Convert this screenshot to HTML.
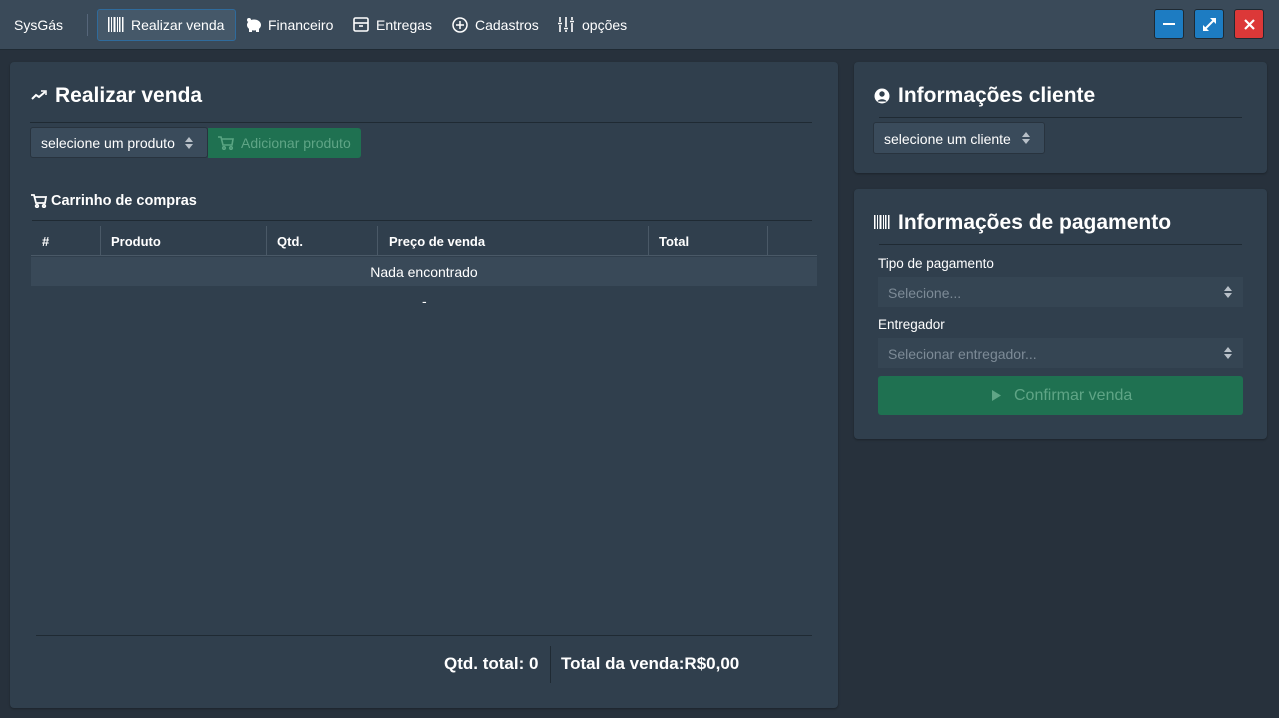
<!DOCTYPE html>
<html><head><meta charset="utf-8"><style>
*{box-sizing:border-box;margin:0;padding:0}
body{width:1279px;height:718px;background:#27313c;font-family:"Liberation Sans",sans-serif;color:#fff;position:relative;overflow:hidden;font-size:14px}
.a{position:absolute}
.top{left:0;top:0;width:1279px;height:50px;background:#3a4a59;border-bottom:1px solid #1f2a33}
.nav{top:16px;font-size:14px;color:#fff;white-space:nowrap}
.card{background:#303f4d;border-radius:4px;box-shadow:0 1px 2px rgba(0,0,0,.3)}
.h{font-size:21px;font-weight:bold;letter-spacing:0;white-space:nowrap}
.line{height:1px;background:#1f2a33}
.sel{background:#3a4b5b;border:1px solid #28333e;border-radius:3px;font-size:14px;color:#fff}
.btn{width:30px;height:30px;border-radius:3px;top:9px;border:1px solid #1f2a33}
.lab{font-size:13.5px}
.inp{background:#354553;color:#7d8b97;font-size:14px;height:30px;padding:8px 10px}
.tot{font-weight:bold;font-size:17px;white-space:nowrap;letter-spacing:0}
</style></head><body>
<div class="a top"></div>
<div class="a nav" style="left:14px;top:17px">SysGás</div>
<div class="a" style="left:87px;top:14px;width:1px;height:22px;background:#56667a"></div>
<div class="a" style="left:97px;top:9px;width:139px;height:32px;background:#455869;border:1px solid #2f6b9c;border-radius:3px"></div>
<svg class="a" style="left:108px;top:17px" width="16" height="15"><g fill="#fff"><rect x="0" width="1.5" height="15"/><rect x="3" width="1" height="15"/><rect x="5.5" width="2" height="15"/><rect x="9" width="1" height="15"/><rect x="11" width="1.5" height="15"/><rect x="14" width="1.5" height="15"/></g></svg>
<div class="a nav" style="left:131px;top:17px">Realizar venda</div>
<svg class="a" style="left:245px;top:17px" width="17" height="15"><ellipse cx="9" cy="8" rx="7" ry="5.5" fill="#fff"/><rect x="4" y="11" width="3" height="4" fill="#fff"/><rect x="11" y="11" width="3" height="4" fill="#fff"/><circle cx="4" cy="3" r="2" fill="#fff"/></svg>
<div class="a nav" style="left:268px;top:17px">Financeiro</div>
<svg class="a" style="left:353px;top:17px" width="16" height="15" fill="none" stroke="#fff" stroke-width="1.6"><rect x="1" y="1" width="14" height="13" rx="1.5"/><line x1="1" y1="6" x2="15" y2="6"/><line x1="6" y1="9" x2="10" y2="9"/></svg>
<div class="a nav" style="left:376px;top:17px">Entregas</div>
<svg class="a" style="left:452px;top:17px" width="16" height="16" fill="none" stroke="#fff" stroke-width="1.5"><circle cx="8" cy="8" r="7"/><path d="M8 4v8M4 8h8"/></svg>
<div class="a nav" style="left:475px;top:17px">Cadastros</div>
<svg class="a" style="left:558px;top:16px" width="17" height="17" stroke="#fff" stroke-width="1.6"><path d="M2 1v5M2 9v7M8 1v10M8 14v2M14 1v3M14 7v9M0 7.5h4M6 12.5h4M12 5.5h4"/></svg>
<div class="a nav" style="left:582px;top:17px">opções</div>
<div class="a btn" style="left:1154px;background:#1d7cc2"><div class="a" style="left:8px;top:13px;width:12px;height:2px;background:#fff"></div></div>
<div class="a btn" style="left:1194px;background:#1d7cc2"><svg class="a" style="left:6px;top:6px" width="17" height="17" stroke="#fff" stroke-width="2" fill="#fff"><path d="M3 14L14 3" fill="none"/><path d="M9 2h6v6z" stroke-width="0"/><path d="M2 9v6h6z" stroke-width="0"/></svg></div>
<div class="a btn" style="left:1234px;background:#dc3838"><svg class="a" style="left:9px;top:9px" width="11" height="11" stroke="#fff" stroke-width="2.2"><path d="M1 1l9 9M10 1l-9 9"/></svg></div>

<div class="a card" style="left:10px;top:62px;width:828px;height:646px"></div>
<svg class="a" style="left:31px;top:90px" width="16" height="10" fill="none" stroke="#fff" stroke-width="2"><path d="M1 9l4-4 3 2 6-5"/><path d="M10 1h5v4" stroke-width="1.5"/></svg>
<div class="a h" style="left:55px;top:84px">Realizar venda</div>
<div class="a line" style="left:30px;top:122px;width:782px"></div>
<div class="a sel" style="left:30px;top:127px;width:178px;height:31px;padding:7px 10px">selecione um produto</div>
<svg class="a" style="left:185px;top:137px" width="8" height="12" fill="#b8c0c8"><path d="M0 5l4-5 4 5zM0 7l4 5 4-5z"/></svg>
<div class="a" style="left:208px;top:128px;width:153px;height:30px;background:#1f7151;border-radius:0 3px 3px 0"></div>
<svg class="a" style="left:218px;top:136px" width="16" height="14" fill="none" stroke="#5aa583" stroke-width="1.6"><path d="M0 1h3l2 8h9l1-6H4"/><circle cx="6" cy="12" r="1.3"/><circle cx="13" cy="12" r="1.3"/></svg>
<div class="a" style="left:241px;top:135px;color:#5fa586">Adicionar produto</div>
<svg class="a" style="left:31px;top:194px" width="16" height="14" fill="none" stroke="#fff" stroke-width="1.8"><path d="M0 1h3l2 8h9l1-6H4"/><circle cx="6" cy="12" r="1.3"/><circle cx="13" cy="12" r="1.3"/></svg>
<div class="a" style="left:51px;top:193px;font-weight:bold;font-size:14.5px;letter-spacing:0">Carrinho de compras</div>
<div class="a line" style="left:32px;top:220px;width:780px"></div>
<div class="a" style="left:31px;top:226px;width:786px;height:30px;border-bottom:1px solid #4a5967;font-weight:bold;font-size:13px">
<span class="a" style="left:11px;top:8px">#</span>
<span class="a" style="left:69px;top:0;width:1px;height:30px;background:#4a5967"></span>
<span class="a" style="left:80px;top:8px">Produto</span>
<span class="a" style="left:235px;top:0;width:1px;height:30px;background:#4a5967"></span>
<span class="a" style="left:246px;top:8px">Qtd.</span>
<span class="a" style="left:346px;top:0;width:1px;height:30px;background:#4a5967"></span>
<span class="a" style="left:358px;top:8px">Preço de venda</span>
<span class="a" style="left:617px;top:0;width:1px;height:30px;background:#4a5967"></span>
<span class="a" style="left:628px;top:8px">Total</span>
<span class="a" style="left:736px;top:0;width:1px;height:30px;background:#4a5967"></span>
</div>
<div class="a" style="left:31px;top:257px;width:786px;height:29px;background:#394958;text-align:center;padding-top:7px;font-size:14px">Nada encontrado</div>
<div class="a" style="left:422px;top:293px">-</div>
<div class="a line" style="left:36px;top:635px;width:776px"></div>
<div class="a" style="left:550px;top:646px;width:1px;height:37px;background:#1f2a33"></div>
<div class="a tot" style="left:444px;top:654px">Qtd. total: 0</div>
<div class="a tot" style="left:561px;top:654px">Total da venda:R$0,00</div>

<div class="a card" style="left:854px;top:62px;width:413px;height:111px"></div>
<svg class="a" style="left:874px;top:88px" width="16" height="16"><circle cx="8" cy="8" r="7.5" fill="#fff"/><circle cx="8" cy="6" r="2.7" fill="#303f4d"/><path d="M3.5 13.5c1-3 8-3 9 0z" fill="#303f4d"/></svg>
<div class="a h" style="left:898px;top:84px">Informações cliente</div>
<div class="a line" style="left:879px;top:117px;width:363px"></div>
<div class="a sel" style="left:873px;top:122px;width:172px;height:32px;padding:8px 10px">selecione um cliente</div>
<svg class="a" style="left:1022px;top:132px" width="8" height="12" fill="#b8c0c8"><path d="M0 5l4-5 4 5zM0 7l4 5 4-5z"/></svg>

<div class="a card" style="left:854px;top:189px;width:413px;height:250px"></div>
<svg class="a" style="left:874px;top:215px" width="16" height="14"><g fill="#fff"><rect x="0" width="1.5" height="14"/><rect x="3" width="1" height="14"/><rect x="5.5" width="2" height="14"/><rect x="9" width="1" height="14"/><rect x="11" width="1.5" height="14"/><rect x="14" width="1.5" height="14"/></g></svg>
<div class="a h" style="left:898px;top:211px">Informações de pagamento</div>
<div class="a line" style="left:879px;top:244px;width:363px"></div>
<div class="a lab" style="left:878px;top:256px">Tipo de pagamento</div>
<div class="a inp" style="left:878px;top:277px;width:365px">Selecione...</div>
<svg class="a" style="left:1224px;top:286px" width="8" height="12" fill="#b8c0c8"><path d="M0 5l4-5 4 5zM0 7l4 5 4-5z"/></svg>
<div class="a lab" style="left:878px;top:317px">Entregador</div>
<div class="a inp" style="left:878px;top:338px;width:365px">Selecionar entregador...</div>
<svg class="a" style="left:1224px;top:347px" width="8" height="12" fill="#b8c0c8"><path d="M0 5l4-5 4 5zM0 7l4 5 4-5z"/></svg>
<div class="a" style="left:878px;top:376px;width:365px;height:39px;background:#1f7151;border-radius:3px"></div>
<svg class="a" style="left:992px;top:390px" width="9" height="11" fill="#5fa586"><path d="M0 0l9 5.5L0 11z"/></svg>
<div class="a" style="left:1014px;top:387px;color:#5fa586;font-size:16px">Confirmar venda</div>
</body></html>
